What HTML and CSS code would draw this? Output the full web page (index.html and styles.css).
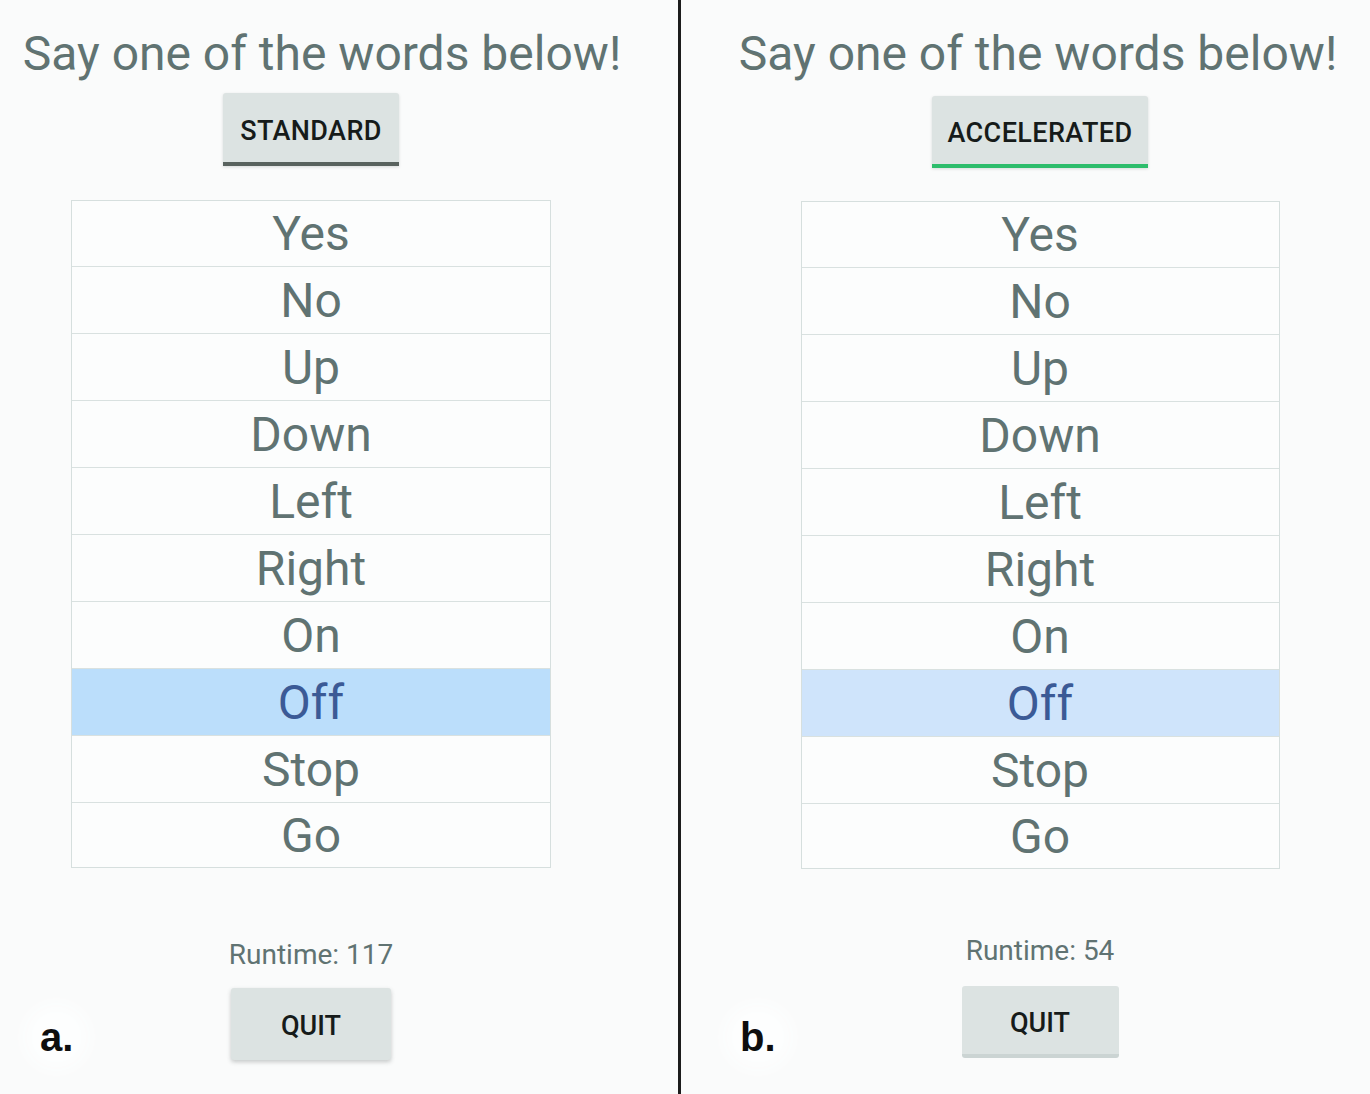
FILE: index.html
```html
<!DOCTYPE html>
<html lang="en">

<head>
	<meta charset="UTF-8">
	<meta name="viewport" content="width=device-width, initial-scale=1.0">
	<title>Speech Words</title>
	<link rel="stylesheet" href="styles.css">
</head>

<body>
	<div class="compare">
		<section class="panel panel-a">
			<h1 class="prompt">Say one of the words below!</h1>
			<button class="mode-button mode-standard">STANDARD</button>
			<ul class="word-list">
				<li class="word">Yes</li>
				<li class="word">No</li>
				<li class="word">Up</li>
				<li class="word">Down</li>
				<li class="word">Left</li>
				<li class="word">Right</li>
				<li class="word">On</li>
				<li class="word word-active">Off</li>
				<li class="word">Stop</li>
				<li class="word">Go</li>
			</ul>
			<p class="runtime">Runtime: 117</p>
			<button class="quit-button">QUIT</button>
			<span class="panel-label">a.</span>
		</section>

		<section class="panel panel-b">
			<h1 class="prompt">Say one of the words below!</h1>
			<button class="mode-button mode-accelerated">ACCELERATED</button>
			<ul class="word-list">
				<li class="word">Yes</li>
				<li class="word">No</li>
				<li class="word">Up</li>
				<li class="word">Down</li>
				<li class="word">Left</li>
				<li class="word">Right</li>
				<li class="word">On</li>
				<li class="word word-active">Off</li>
				<li class="word">Stop</li>
				<li class="word">Go</li>
			</ul>
			<p class="runtime">Runtime: 54</p>
			<button class="quit-button">QUIT</button>
			<span class="panel-label">b.</span>
		</section>
	</div>
</body>

</html>
```

FILE: styles.css
```css
* {
	margin: 0;
	padding: 0;
	box-sizing: border-box;
}

body {
	background: #fafbfb;
	font-family: Roboto, "Noto Sans", sans-serif;
	color: #607372;
}

.compare {
	display: flex;
	height: 1094px;
}

.panel {
	position: relative;
	display: flex;
	flex-direction: column;
	align-items: center;
	padding-top: 26px;
}

.panel-a {
	width: 681px;
	padding-right: 56px;
	border-right: 3px solid #1c1c1c;
}

.panel-b {
	flex: 1;
	padding-left: 29px;
}

.prompt {
	font-size: 48px;
	font-weight: 400;
	line-height: 56px;
	white-space: nowrap;
}

.panel-a .prompt {
	padding-left: 22px;
}

.panel-b .prompt {
	padding-right: 4px;
}

.mode-button {
	font-family: Roboto, sans-serif;
	font-size: 27px;
	font-weight: 500;
	letter-spacing: 0.4px;
	color: #161b1a;
	background: #dce3e2;
	border: none;
	border-radius: 3px 3px 0 0;
	padding: 6px 17px 0;
	box-shadow: 0 1px 3px rgba(60, 70, 70, 0.18);
}

.mode-standard {
	margin-top: 11px;
	height: 73px;
	border-bottom: 4px solid #59635f;
}

.mode-accelerated {
	margin-top: 14px;
	height: 72px;
	padding: 6px 15px 0;
	border-bottom: 4px solid #2dbd6c;
}

.word-list {
	list-style: none;
	width: 480px;
	margin-top: 34px;
	border: 1px solid #d6dfde;
	background: #fcfdfd;
}

.panel-b .word-list {
	width: 479px;
	margin-top: 33px;
}

.word {
	height: 67px;
	line-height: 67px;
	text-align: center;
	font-size: 48px;
	border-top: 1px solid #d9e1e0;
}

.word:first-child {
	border-top: none;
	height: 65px;
	line-height: 66px;
}

.word:last-child {
	height: 65px;
	line-height: 66px;
}

.word-active {
	background: #bbdefb;
	color: #3b5a96;
}

.panel-b .word-active {
	background: #cfe4fb;
}

.runtime {
	margin-top: 71px;
	font-size: 28px;
	line-height: 32px;
}

.panel-b .runtime {
	margin-top: 66px;
}

.quit-button {
	margin-top: 17px;
	width: 160px;
	height: 72px;
	padding-top: 4px;
	font-family: Roboto, sans-serif;
	font-size: 27px;
	font-weight: 500;
	color: #161b1a;
	background: #dce3e2;
	border: none;
	border-radius: 3px;
	box-shadow: 0 2px 4px rgba(60, 70, 70, 0.28);
}

.panel-b .quit-button {
	margin-top: 19px;
	width: 157px;
	padding-top: 6px;
	box-shadow: none;
	border-bottom: 4px solid #cbd4d3;
}

.panel-label {
	position: absolute;
	top: 1014px;
	font-family: "Liberation Sans", Arial, sans-serif;
	font-size: 40px;
	font-weight: 700;
	line-height: 46px;
	color: #0e0e0e;
	padding: 0 6px;
	background: #fdfefe;
	border-radius: 50%;
	box-shadow: 0 0 16px 10px #fdfefe;
}

.panel-a .panel-label {
	left: 34px;
}

.panel-b .panel-label {
	left: 53px;
}
```
